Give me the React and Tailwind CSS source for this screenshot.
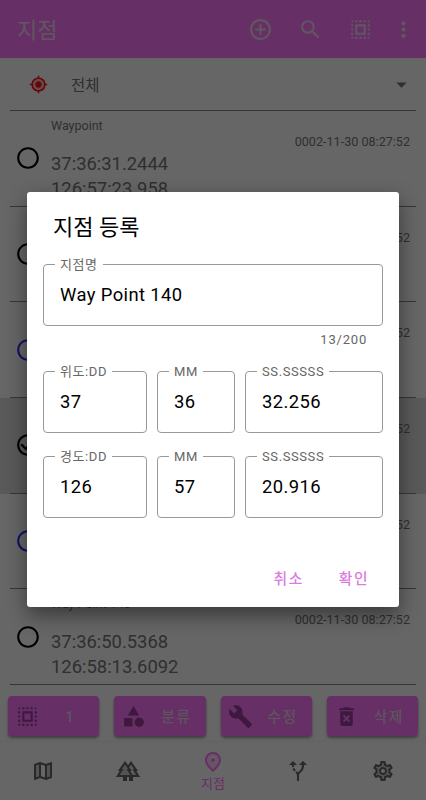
import {
  MdAddCircleOutline,
  MdAltRoute,
  MdArrowDropDown,
  MdBuild,
  MdCategory,
  MdCheckCircleOutline,
  MdCircle,
  MdDeleteForever,
  MdForest,
  MdMap,
  MdMoreVert,
  MdMyLocation,
  MdOutlineForest,
  MdOutlineMap,
  MdOutlinePlace,
  MdOutlineSettings,
  MdPlace,
  MdRadioButtonUnchecked,
  MdSearch,
  MdSelectAll,
  MdSettings,
} from "react-icons/md";

const waypoints = [
  { name: "Waypoint", lat: "37:36:31.2444", lon: "126:57:23.958" },
  { name: "Waypoint", lat: "37:36:31.2444", lon: "126:57:23.958" },
  { name: "Waypoint", lat: "37:36:31.2444", lon: "126:57:23.958", color: "text-[#3030ff]" },
  { name: "Waypoint", lat: "37:36:31.2444", lon: "126:57:23.958", selected: true },
  { name: "Waypoint", lat: "37:36:31.2444", lon: "126:57:23.958", color: "text-[#3030ff]" },
  { name: "Way Point 140", lat: "37:36:50.5368", lon: "126:58:13.6092" },
];

const actions = [
  { label: "1", icon: MdSelectAll },
  { label: "분류", icon: MdCategory },
  { label: "수정", icon: MdBuild },
  { label: "삭제", icon: MdDeleteForever },
];

const tabs = [
  { id: "map", icon: MdOutlineMap, fill: MdMap },
  { id: "forest", icon: MdOutlineForest, fill: MdForest },
  { id: "place", icon: MdOutlinePlace, fill: MdPlace, label: "지점" },
  { id: "route", icon: MdAltRoute, fill: MdAltRoute },
  { id: "settings", icon: MdOutlineSettings, fill: MdSettings },
];

// Outline icon with a faint filled one under it, both in the same grid cell
const TwoToneIcon = ({ icon: Icon, fill: Fill, className, fillClassName = "" }) => {
  return (
    <span className={`grid shrink-0 ${className}`}>
      <Fill className={`col-start-1 row-start-1 h-full w-full opacity-30 ${fillClassName}`} />
      <Icon className="col-start-1 row-start-1 h-full w-full" />
    </span>
  );
};

const WaypointRow = ({ name, lat, lon, color = "text-black", selected }) => {
  const Icon = selected ? MdCheckCircleOutline : MdRadioButtonUnchecked;
  return (
    <div className={`min-h-0 flex-1 ${selected ? "bg-[#dedede]" : ""}`}>
      <div className="mx-[10px] flex h-full border-b border-[#888]">
        <div className="flex w-[41px] items-center pl-[5px]">
          <Icon className={`h-[26px] w-[26px] ${color}`} />
        </div>
        <div className="flex-1 pt-[7px] text-[#777]">
          <p className="text-[12.5px] leading-[16px]">{name}</p>
          <p className="mt-[17px] text-[18.4px] leading-[25px]">{lat}</p>
          <p className="text-[18.4px] leading-[25px]">{lon}</p>
        </div>
        <p className="pr-[6px] pt-[23px] text-[12.6px] leading-[16px] text-[#777]">
          0002-11-30 08:27:52
        </p>
      </div>
    </div>
  );
};

const Field = ({ label, value, className }) => {
  return (
    <fieldset
      className={`h-[70px] min-w-0 rounded-[4px] border border-[#999] pl-[11px] ${className}`}
    >
      <legend className="h-[16px] whitespace-nowrap px-[5px] text-[13px] leading-[18px] tracking-[0.6px] text-[#666]">
        {label}
      </legend>
      <p className="pl-[5px] pt-[10px] text-[18.4px] leading-[26px] tracking-[0.4px] text-black">
        {value}
      </p>
    </fieldset>
  );
};

export default function App() {
  return (
    <div className="relative h-[800px] w-[426px] overflow-hidden bg-white font-['Roboto','Noto_Sans_CJK_KR',sans-serif]">
      <div className="flex h-full flex-col">
        <header className="flex h-[58px] shrink-0 items-center bg-[#ff76ff] pl-[17px] text-[#f0d8f0]">
          <h1 className="flex-1 pt-[2px] text-[22px]">지점</h1>
          <MdAddCircleOutline className="h-[25px] w-[25px]" />
          <MdSearch className="ml-[25px] h-[25px] w-[25px]" />
          <MdSelectAll className="ml-[25px] h-[25px] w-[25px]" />
          <MdMoreVert className="ml-[18px] mr-[10px] h-[25px] w-[25px]" />
        </header>

        <div className="mx-[10px] flex h-[53px] shrink-0 items-center border-b border-[#888] pl-[19px] text-[#777]">
          <TwoToneIcon
            icon={MdMyLocation}
            fill={MdCircle}
            className="h-[19px] w-[19px] text-[#ff1010]"
            fillClassName="scale-[0.7]"
          />
          <span className="ml-[23px] flex-1 pt-[6px] text-[15.5px]">전체</span>
          <MdArrowDropDown className="mr-[2px] h-[25px] w-[25px]" />
        </div>

        <div className="flex h-[574px] shrink-0 flex-col">
          {waypoints.map((point, index) => (
            <WaypointRow key={index} {...point} />
          ))}
        </div>

        <div className="grid shrink-0 grid-cols-4 gap-[15px] px-[8px] pb-[5px] pt-[11px]">
          {actions.map(({ label, icon: Icon }) => (
            <button
              key={label}
              className="flex h-[40px] items-center rounded-[4px] bg-[#ff76ff] pl-[7px] text-[#9c3d9c] shadow-[0_2px_3px_rgba(0,0,0,0.4)]"
            >
              <Icon className="h-[25px] w-[25px] shrink-0" />
              <span className="flex-1 pl-[1px] pt-[3px] text-center text-[14.8px] font-medium tracking-[1.5px] text-[#eed0ee]">
                {label}
              </span>
            </button>
          ))}
        </div>

        <nav className="grid flex-1 grid-cols-5 border-t border-[#f5f5f5]">
          {tabs.map(({ id, icon, fill, label }) => (
            <div
              key={id}
              className={`flex flex-col items-center justify-center ${label ? "pt-[2px] text-[#ff76ff]" : "text-[#666]"}`}
            >
              <TwoToneIcon icon={icon} fill={fill} className="h-[24px] w-[24px]" />
              {label && <span className="text-[13px] leading-[20px]">{label}</span>}
            </div>
          ))}
        </nav>
      </div>

      {/* Dialog over the dimmed list */}
      <div className="absolute inset-0 flex flex-col items-center bg-black/60 pt-[192px]">
        <div className="flex h-[415px] w-[372px] flex-col rounded-[3px] bg-white px-[16px] shadow-[0_8px_20px_rgba(0,0,0,0.45)]">
          <h2 className="pl-[10px] pt-[19px] text-[22px] leading-[34px] text-black">지점 등록</h2>
          <Field label="지점명" value="Way Point 140" className="mt-[11px]" />
          <p className="pr-[16px] pt-[5px] text-right text-[13px] leading-[18px] tracking-[0.8px] text-[#666]">
            13/200
          </p>
          <div className="mt-[14px] flex gap-[10px]">
            <Field label="위도:DD" value="37" className="w-[104px]" />
            <Field label="MM" value="36" className="w-[78px]" />
            <Field label="SS.SSSSS" value="32.256" className="flex-1" />
          </div>
          <div className="mt-[15px] flex gap-[10px]">
            <Field label="경도:DD" value="126" className="w-[104px]" />
            <Field label="MM" value="57" className="w-[78px]" />
            <Field label="SS.SSSSS" value="20.916" className="flex-1" />
          </div>
          <div className="flex justify-end gap-[35px] pr-[14px] pt-[50px] text-[14.8px] font-medium leading-[22px] tracking-[1.5px] text-[#dc7be0]">
            <button>취소</button>
            <button>확인</button>
          </div>
        </div>
      </div>
    </div>
  );
}
